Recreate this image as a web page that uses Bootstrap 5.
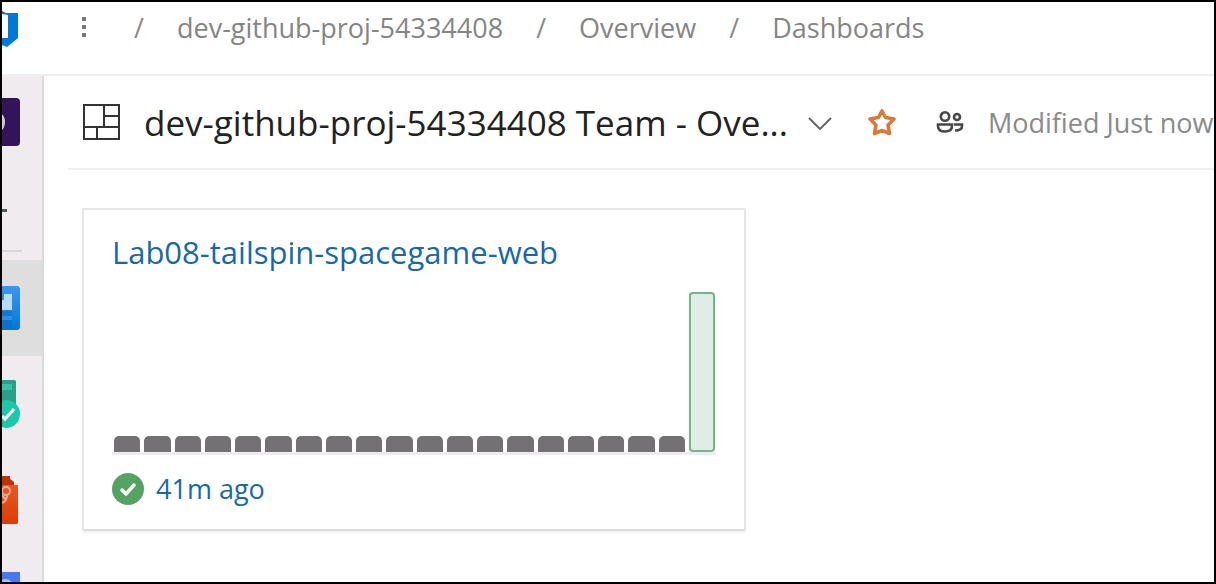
<!DOCTYPE html>
<html lang="en">
<head>
<meta charset="utf-8">
<meta name="viewport" content="width=device-width, initial-scale=1">
<title>Dashboards - Overview</title>
<link href="https://cdn.jsdelivr.net/npm/bootstrap@5.3.0/dist/css/bootstrap.min.css" rel="stylesheet">
<style>
  body { font-family: "Open Sans", "Noto Sans", sans-serif; font-size: 27px; color: #222; }
  a { text-decoration: none; }
  svg { display: block; flex: none; }
  .app-frame { border: 2px solid #000; }
  .top-bar { height: 74px; padding-bottom: 20px; border-bottom: 2px solid #efefef; }
  .crumbs { color: #8a8a8a; line-height: 32px; padding-left: 14px; }
  .crumbs a { color: #858585; }
  .crumbs li { display: flex; align-items: center; }
  .slash { width: 12px; margin: 0 32px; }
  .icon-btn { border: 0; background: none; padding: 0; display: block; flex: none; }
  .more-btn { margin-left: 63px; }
  .side-nav { width: 42px; background: #efebee; border-right: 2px solid #dcdadc; flex: none; }
  .nav-slot { height: 96px; display: flex; align-items: center; flex: none; }
  .nav-slot.current { background: #dedede; }
  .slot-project { height: 92px; }
  .slot-new { height: 82px; padding-top: 3px; }
  .nav-rule { width: 20px; height: 2px; background: #dad6d9; margin-bottom: 8px; flex: none; }
  .title-bar { height: 94px; margin-left: 24px; padding: 2px 0 0 14px; border-bottom: 2px solid #efefef; }
  .board-title { font-size: 35px; font-weight: 400; line-height: 44px; margin: 0 20px 0 24px; color: #222; }
  .fav-btn { margin-left: 36px; }
  .team-btn { margin-left: 40px; }
  .modified { color: #8a8a8a; margin-left: 24px; }
  .widget { width: 664px; max-width: 100%; margin: 38px 0 0 38px; padding: 20px 28px 22px; border: 2px solid #e6e6e8; border-bottom-color: #dcdcde; border-radius: 2px; box-shadow: 0 2px 3px #f3eff2; }
  .widget-name { font-size: 31px; line-height: 44px; font-weight: 400; margin: 0; }
  .widget a { color: #1b68a8; }
  .history { height: 163px; margin-top: 18px; gap: 4px; padding: 0 1px 0 2px; border-bottom: 3px solid #efebee; }
  .run { flex: 1 1 0; height: 16px; background: #737174; border-radius: 5px 5px 0 0; }
  .run.passed { height: 160px; background: #deeee6; box-shadow: inset 0 0 0 2px #73b584; border-radius: 4px; }
  .result { margin-top: 16px; line-height: 36px; }
</style>
</head>
<body>
<div class="app-frame vh-100 d-flex flex-column overflow-hidden bg-white">
  <header class="top-bar d-flex align-items-center flex-shrink-0">
    <a href="#" aria-label="Azure DevOps"><svg width="16" height="38" viewBox="0 0 16 38"><path fill="#0078d7" d="M0 2L4 4H16V29L5 38L0 36V29H6V6L0 5Z"/></svg></a>
    <button class="icon-btn more-btn" aria-label="More"><svg width="6" height="26" viewBox="0 0 6 26" fill="#777"><path d="M1 2h4v4H1zM1 10h4v4H1zM1 18h4v4H1z"/></svg></button>
    <nav aria-label="Breadcrumb">
      <ol class="crumbs d-flex list-unstyled m-0 text-nowrap">
        <li><span class="slash text-center">/</span><a href="#">dev-github-proj-54334408</a></li>
        <li><span class="slash text-center">/</span><a href="#">Overview</a></li>
        <li><span class="slash text-center">/</span><a href="#">Dashboards</a></li>
      </ol>
    </nav>
  </header>
  <div class="d-flex flex-grow-1 overflow-hidden">
    <nav class="side-nav d-flex flex-column overflow-hidden" aria-label="Project">
      <a class="nav-slot slot-project" href="#" aria-label="Project"><svg width="18" height="48" viewBox="0 0 18 48"><path fill="#32145a" d="M0 0H14Q18 0 18 4V44Q18 48 14 48H0Z"/><path fill="#cfc6dc" d="M0 16Q3 19 3 24T0 32Z"/></svg></a>
      <a class="nav-slot slot-new" href="#" aria-label="New"><svg width="6" height="4" viewBox="0 0 6 4"><path fill="#555660" d="M0 0H5V3H0Z"/></svg></a>
      <div class="nav-rule"></div>
      <a class="nav-slot current" href="#" aria-label="Overview"><svg width="18" height="44" viewBox="0 0 18 44"><defs><linearGradient id="ov" x2="0" y2="1"><stop stop-color="#3c99e8"/><stop offset="1" stop-color="#0078d7"/></linearGradient></defs><path fill="url(#ov)" d="M0 0H16L18 2V42L16 44H0Z"/><path fill="#b5dcfa" d="M0 14H2V8H10V24H0Z"/><path fill="#1267bd" d="M0 25H10V30H0ZM0 34H10V43H0Z" opacity=".5"/><path fill="#2b8fe6" d="M0 30H10V34H0Z"/></svg></a>
      <a class="nav-slot" href="#" aria-label="Boards"><svg width="18" height="48" viewBox="0 0 18 48"><path fill="#2d9f89" d="M0 0H13L14 1V30H0Z"/><path fill="#35c3a8" d="M0 4H10V10H0Z"/><path fill="#1bc9aa" d="M0 21Q3 20 4 20A14 14 0 0 1 4 48Q3 48 0 47Z"/><path d="M0 36L3 39L12 29" fill="none" stroke="#fff" stroke-width="3"/></svg></a>
      <a class="nav-slot" href="#" aria-label="Repos"><svg width="16" height="48" viewBox="0 0 16 48"><defs><linearGradient id="rp" x2="0" y2="1"><stop stop-color="#e05a2b"/><stop offset="1" stop-color="#df3c00"/></linearGradient></defs><path fill="#b93400" d="M0 0H8V3L12 6V9H0Z"/><path fill="url(#rp)" d="M0 9H16V47L15 48H0Z"/><g fill="none" stroke="#f5ab8e" stroke-width="2"><circle cx="4" cy="15" r="4"/><path d="M5 19Q5 25 0 27M0 19L3 23"/></g></svg></a>
      <a class="nav-slot" href="#" aria-label="Pipelines"><svg width="18" height="48" viewBox="0 0 18 48"><path fill="#477ae6" d="M0 0H18V48H0Z"/><path fill="#a8c1fa" d="M0 8Q5 5 10 10V16H0Z"/></svg></a>
    </nav>
    <main class="flex-grow-1 overflow-hidden">
      <div class="title-bar d-flex align-items-center text-nowrap">
        <svg width="38" height="38" viewBox="0 0 38 38" fill="none" stroke="#333" stroke-width="2"><path d="M2 1H37V35H2ZM2 23H37M22 1V23M22 12H37M15 23V35"/></svg>
        <h1 class="board-title">dev-github-proj-54334408 Team - Ove...</h1>
        <button class="icon-btn" aria-label="Choose dashboard"><svg width="24" height="14" viewBox="0 0 24 14"><path d="M1 2L12 13L23 2" fill="none" stroke="#666" stroke-width="2"/></svg></button>
        <button class="icon-btn fav-btn" aria-label="Favorite"><svg width="28" height="30" viewBox="0 0 28 30"><path d="M14 3L17.500 9.500L26 11L20 17L21.500 25.500L14 22.500L6.500 25.500L8 17L2 11L10.500 9.500Z" fill="none" stroke="#d97a3d" stroke-width="3.600" stroke-linejoin="round"/></svg></button>
        <button class="icon-btn team-btn" aria-label="Team"><svg width="28" height="24" viewBox="0 0 28 24" fill="none" stroke="#484848" stroke-width="2.600"><circle cx="9" cy="5.500" r="4.200"/><circle cx="21" cy="6" r="3"/><path d="M2 13.500H16V15Q16 20.500 9 20.500T2 15ZM18 13.500H26V15Q26 19.500 19 19.500"/></svg></button>
        <span class="modified">Modified Just now</span>
      </div>
      <section class="widget">
        <h2 class="widget-name"><a href="#">Lab08-tailspin-spacegame-web</a></h2>
        <div class="history d-flex align-items-end" role="img" aria-label="Build history">
          <div class="run"></div><div class="run"></div><div class="run"></div><div class="run"></div><div class="run"></div>
          <div class="run"></div><div class="run"></div><div class="run"></div><div class="run"></div><div class="run"></div>
          <div class="run"></div><div class="run"></div><div class="run"></div><div class="run"></div><div class="run"></div>
          <div class="run"></div><div class="run"></div><div class="run"></div><div class="run"></div><div class="run passed"></div>
        </div>
        <div class="result d-flex align-items-center">
          <svg width="32" height="32" viewBox="0 0 32 32"><circle cx="16" cy="16" r="16" fill="#55a362"/><path d="M10 17L14 21L22 12" fill="none" stroke="#fff" stroke-width="3.500" stroke-linecap="round" stroke-linejoin="round"/></svg>
          <a class="ms-2 ps-1" href="#">41m ago</a>
        </div>
      </section>
    </main>
  </div>
</div>
<script src="https://cdn.jsdelivr.net/npm/bootstrap@5.3.0/dist/js/bootstrap.bundle.min.js"></script>
</body>
</html>
